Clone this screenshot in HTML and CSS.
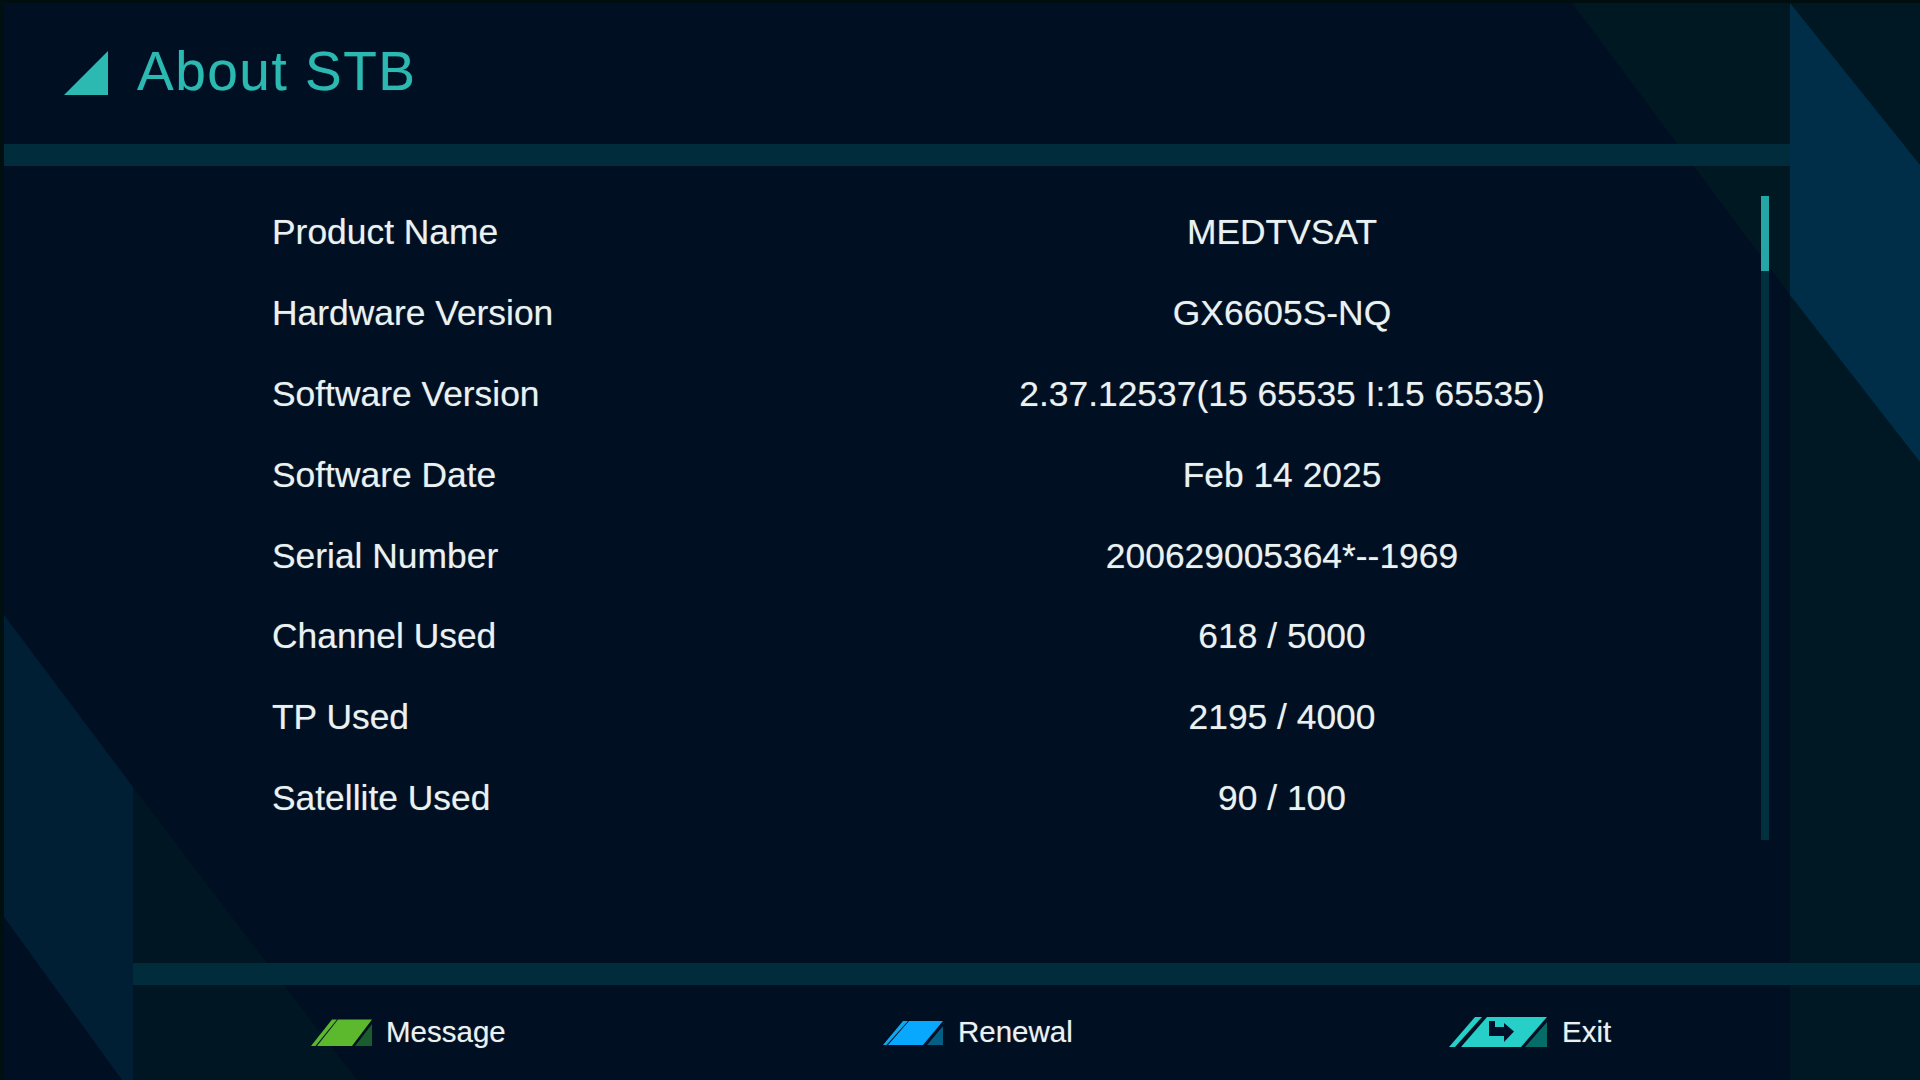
FILE: index.html
```html
<!DOCTYPE html>
<html lang="en">
<head>
  <meta charset="UTF-8">
  <title>About STB</title>
  <link rel="stylesheet" href="styles.css">
</head>
<body>
  <div class="screen">

    <!-- background shapes -->
    <svg class="backdrop" viewBox="0 0 1920 1080" aria-hidden="true">
      <rect x="1790" y="0" width="130" height="1080" fill="#001824"/>
      <polygon points="1570,0 1790,0 1790,295" fill="#001822"/>
      <polygon points="1790,3 1920,165 1920,462 1790,295" fill="#002d47"/>
      <polygon points="133,787 267,963 357,1080 133,1080" fill="#001622"/>
      <polygon points="4,615 133,787 133,1080 122,1080 4,917" fill="#001f35"/>
      <rect x="0" y="0" width="1920" height="3" fill="#000e10"/>
      <rect x="0" y="0" width="4" height="1080" fill="#000f10"/>
    </svg>

    <header class="title-area">
      <svg class="title-mark" viewBox="0 0 44 44" aria-hidden="true">
        <polygon points="0,44 44,44 44,0" fill="#2cb9b1"/>
      </svg>
      <h1>About STB</h1>
    </header>
    <div class="bar bar-top"></div>

    <main class="content">
      <div class="info">
        <div class="info-row"><span class="info-label">Product Name</span><span class="info-value">MEDTVSAT</span></div>
        <div class="info-row"><span class="info-label">Hardware Version</span><span class="info-value">GX6605S-NQ</span></div>
        <div class="info-row"><span class="info-label">Software Version</span><span class="info-value">2.37.12537(15 65535 I:15 65535)</span></div>
        <div class="info-row"><span class="info-label">Software Date</span><span class="info-value">Feb 14 2025</span></div>
        <div class="info-row"><span class="info-label">Serial Number</span><span class="info-value">200629005364*--1969</span></div>
        <div class="info-row"><span class="info-label">Channel Used</span><span class="info-value">618 / 5000</span></div>
        <div class="info-row"><span class="info-label">TP Used</span><span class="info-value">2195 / 4000</span></div>
        <div class="info-row"><span class="info-label">Satellite Used</span><span class="info-value">90 / 100</span></div>
      </div>
      <div class="scrollbar"><div class="scrollbar-thumb"></div></div>
    </main>

    <div class="bar bar-bottom"></div>
    <footer class="hints">
      <div class="hint">
        <svg class="hint-icon icon-message" viewBox="0 0 61 27" aria-hidden="true">
          <polygon points="0,27 4.5,27 26,0.5 21,0.5" fill="#5cb82c"/>
          <polygon points="6,27 41,27 61,0.5 27,0.5" fill="#5cb82c"/>
          <polygon points="44,27 61,27 61,5" fill="#1a5c2e"/>
        </svg>
        <span>Message</span>
      </div>
      <div class="hint">
        <svg class="hint-icon icon-renewal" viewBox="0 0 60 25" aria-hidden="true">
          <polygon points="0,25 3.5,25 25,1 20,1" fill="#0fa8f0"/>
          <polygon points="5,25 40,25 60,1 26,1" fill="#08a8ff"/>
          <polygon points="44,25 60,25 60,6" fill="#045f85"/>
        </svg>
        <span>Renewal</span>
      </div>
      <div class="hint">
        <svg class="hint-icon icon-exit" viewBox="0 0 98 30" aria-hidden="true">
          <polygon points="0,30 6,30 33,0 26,0" fill="#26cfc8"/>
          <polygon points="12,30 72,30 98,0 38,0" fill="#26cfc8"/>
          <polygon points="76,30 98,30 98,5" fill="#056c68"/>
          <polygon points="40,4 46,4 46,10 55,10 55,6 65,14.5 55,25 55,19 40,19" fill="#001028"/>
        </svg>
        <span>Exit</span>
      </div>
    </footer>
  </div>
</body>
</html>
```

FILE: styles.css
```css
* {
  box-sizing: border-box;
}
html, body {
  margin: 0;
  padding: 0;
}
body {
  width: 1920px;
  height: 1080px;
  overflow: hidden;
  background: #000f22;
  font-family: "Liberation Sans", Arial, sans-serif;
  color: #e9f1f1;
  text-shadow: 0 0 1px rgba(233, 241, 241, 0.45);
}
.screen {
  position: relative;
  width: 1920px;
  height: 1080px;
  display: flex;
  flex-direction: column;
}
.backdrop {
  position: absolute;
  top: 0;
  left: 0;
  width: 1920px;
  height: 1080px;
}
.title-area, .bar, .content, .hints {
  position: relative;
}
.title-area {
  height: 144px;
  padding-left: 64px;
  display: flex;
  align-items: flex-start;
}
.title-mark {
  width: 44px;
  height: 44px;
  margin-top: 51px;
}
h1 {
  margin: 40px 0 0 29px;
  font-size: 55px;
  line-height: 62px;
  font-weight: normal;
  letter-spacing: 1.5px;
  color: #2cb9b1;
  text-shadow: 0 0 1px rgba(44, 185, 177, 0.5);
}
.bar {
  height: 22px;
  flex: none;
  background: #012c3c;
}
.bar-top {
  margin-left: 4px;
  width: 1786px;
}
.bar-bottom {
  margin-left: 133px;
}
.content {
  height: 797px;
  padding-left: 272px;
  display: flex;
  align-items: flex-start;
}
.info {
  width: 1400px;
  margin-top: 26.5px;
}
.info-row {
  height: 80.8px;
  display: grid;
  grid-template-columns: 620px 780px;
  align-items: center;
  font-size: 35.4px;
}
.info-value {
  text-align: center;
}
.scrollbar {
  width: 8px;
  height: 644px;
  margin: 30px 0 0 89px;
  background: #01303f;
}
.scrollbar-thumb {
  height: 75px;
  background: #25a6a6;
}
.hints {
  flex: 1;
  padding-left: 311px;
  display: grid;
  grid-template-columns: 572px 566px auto;
  align-items: center;
  font-size: 29.5px;
  padding-bottom: 1px;
}
.hint {
  display: flex;
  align-items: center;
}
.hint-icon {
  flex: none;
}
.icon-message {
  width: 61px;
  height: 27px;
  margin-right: 14px;
}
.icon-renewal {
  width: 60px;
  height: 25px;
  margin-right: 15px;
}
.icon-exit {
  width: 98px;
  height: 30px;
  margin-right: 15px;
}
```
